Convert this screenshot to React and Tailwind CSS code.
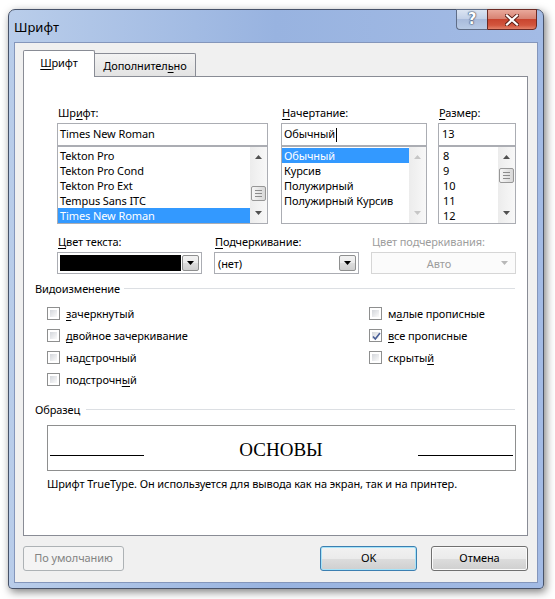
import React from "react";

const U = ({ children }) => (
  <span className="underline underline-offset-[2px] decoration-1">{children}</span>
);

function Arrow({ dir = "down", color = "#505050" }) {
  return (
    <svg width="7" height="4" viewBox="0 0 7 4" className="block">
      {dir === "down" ? (
        <path d="M0 0H7L3.5 4Z" fill={color} />
      ) : (
        <path d="M0 4H7L3.5 0Z" fill={color} />
      )}
    </svg>
  );
}

function Thumb({ className }) {
  return (
    <div
      className={`mx-[1px] h-[15px] rounded-[2px] border border-[#979797] bg-linear-to-r from-[#f6f6f6] to-[#d8d8d8] flex flex-col items-center justify-center gap-[2px] ${className}`}
    >
      <div className="w-[7px] h-px bg-[#8c8c8c]" />
      <div className="w-[7px] h-px bg-[#8c8c8c]" />
      <div className="w-[7px] h-px bg-[#8c8c8c]" />
    </div>
  );
}

function VScroll({ thumbClass, disabled }) {
  const c = disabled ? "#c6c6c6" : "#505050";
  return (
    <div className="w-[17px] h-full flex flex-col bg-linear-to-r from-[#ececec] to-[#f8f8f8]">
      <div className="h-[17px] flex items-center justify-center pt-[2px]">
        <Arrow dir="up" color={c} />
      </div>
      <div className="flex-1 flex flex-col">
        {thumbClass && <Thumb className={thumbClass} />}
      </div>
      <div className="h-[17px] flex items-center justify-center pb-[3px]">
        <Arrow dir="down" color={c} />
      </div>
    </div>
  );
}

function ListBox({ items, selected, thumbClass, disabled, textPad = "pl-[2px]" }) {
  return (
    <div className="h-[78px] border border-[#abadb3] bg-white flex">
      <div className="flex-1 pt-[1px] overflow-hidden">
        {items.map((it, i) => (
          <div
            key={it}
            className={`h-[15px] leading-[15px] whitespace-nowrap ${textPad} ${
              i === selected ? "bg-[#3399ff] text-white" : ""
            }`}
          >
            {it}
          </div>
        ))}
      </div>
      <VScroll thumbClass={thumbClass} disabled={disabled} />
    </div>
  );
}

function DropBtn({ disabled }) {
  return disabled ? (
    <div className="w-[17px] h-full flex items-center justify-center">
      <Arrow color="#b8b8b8" />
    </div>
  ) : (
    <div className="w-[17px] h-full rounded-[2px] border border-[#8e8f8f] bg-[linear-gradient(to_bottom,#f2f2f2_0%,#ebebeb_50%,#dddddd_50%,#cfcfcf_100%)] flex items-center justify-center">
      <Arrow color="#000000" />
    </div>
  );
}

function Check({ checked }) {
  return (
    <div className="w-[13px] h-[13px] border border-[#8e8f8f] bg-white p-[2px] shrink-0">
      <div className="w-full h-full bg-linear-to-br from-[#d3d6db] to-[#fbfbfb] relative">
        {checked && (
          <svg width="11" height="11" viewBox="0 0 11 11" className="absolute -left-[1px] -top-[1px]">
            <path d="M2 5.5L4.3 8L9 2" fill="none" stroke="#4a5f97" strokeWidth="1.6" />
          </svg>
        )}
      </div>
    </div>
  );
}

function CheckRow({ checked, children }) {
  return (
    <div className="h-[22px] flex items-center gap-[6px]">
      <Check checked={checked} />
      <span className="leading-[15px]">{children}</span>
    </div>
  );
}

export default function App() {
  return (
    <div className="w-[555px] h-[599px] bg-white overflow-hidden font-['Noto_Sans','Open_Sans',sans-serif] text-[11px] tracking-[-0.1px] text-black">
      <div className="ml-[8px] mt-[9px] w-[536px] h-[580px] rounded-t-[7px] rounded-b-[4px] border border-[#48536a] bg-[linear-gradient(to_right,#b9cdea,#98b3e0_50%,#a3bbe5)] shadow-[2px_3px_9px_rgba(0,0,0,0.5)] flex flex-col px-[5px] pb-[5px]">
        {/* title bar */}
        <div className="h-[32px] flex items-start">
          <span className="mt-[9px] text-[13px] leading-[17px] tracking-normal text-black">Шрифт</span>
          <div className="ml-auto mr-[1px] -mt-px flex h-[21px]">
            <div className="w-[31px] h-full rounded-bl-[4px] border border-[#5f6d87] border-r-0 bg-[linear-gradient(to_bottom,#dbe4f2_0%,#c3d1e8_45%,#a9bbdb_50%,#b9cbe6_100%)] flex items-center justify-center">
              <span className="font-['DejaVu_Sans',sans-serif] text-[15px] leading-none font-bold text-white [text-shadow:0_0_1px_#3b4a66,0_0_1px_#3b4a66,0_0_2px_#3b4a66]">
                ?
              </span>
            </div>
            <div className="w-[50px] h-full rounded-br-[4px] border border-[#6b2a24] bg-[linear-gradient(to_bottom,#e9a99b_0%,#d88373_45%,#c9452f_50%,#d2553d_80%,#e3826a_100%)] flex items-center justify-center">
              <svg width="14" height="12" viewBox="0 0 14 12">
                <path d="M2 1.5L12 10.5M12 1.5L2 10.5" stroke="#5a1d14" strokeWidth="4" strokeLinecap="square" />
                <path d="M2 1.5L12 10.5M12 1.5L2 10.5" stroke="#ffffff" strokeWidth="2.2" strokeLinecap="square" />
              </svg>
            </div>
          </div>
        </div>

        {/* client */}
        <div className="flex-1 bg-[#f0f0f0] border border-[#8496bb] flex flex-col">
          {/* tabs */}
          <div className="mt-[7px] ml-[8px] flex items-end h-[26px]">
            <div className="relative z-10 w-[72px] h-[27px] -mb-px bg-white border border-b-0 border-[#898c95] rounded-t-[2px] flex items-center justify-center pb-[4px]">
              <span className="leading-[15px]">
                <U>Ш</U>рифт
              </span>
            </div>
            <div className="w-[101px] h-[23px] border border-l-0 border-b-0 border-[#898c95] rounded-tr-[2px] bg-linear-to-b from-[#f3f3f3] to-[#e3e3e3] flex items-center justify-center">
              <span className="leading-[15px]">
                Дополнител<U>ь</U>но
              </span>
            </div>
          </div>

          {/* panel */}
          <div className="ml-[8px] mr-[9px] h-[460px] bg-white border border-[#898c95] flex flex-col">
            {/* section 1 */}
            <div className="pt-[28px] pl-[33px] flex">
              <div className="w-[211px] flex flex-col">
                <div className="h-[15px] leading-[15px] pl-[1px]">
                  Шр<U>и</U>фт:
                </div>
                <div className="mt-[3px] h-[23px] border border-[#abadb3] bg-white pl-[2px] flex items-center">
                  Times New Roman
                </div>
                <ListBox
                  items={["Tekton Pro", "Tekton Pro Cond", "Tekton Pro Ext", "Tempus Sans ITC", "Times New Roman"]}
                  selected={4}
                  thumbClass="mt-[22px]"
                />
              </div>
              <div className="ml-[13px] w-[146px] flex flex-col">
                <div className="h-[15px] leading-[15px] pl-[1px]">
                  <U>Н</U>ачертание:
                </div>
                <div className="mt-[3px] h-[23px] border border-[#abadb3] bg-white pl-[2px] flex items-center">
                  Обычный
                  <span className="ml-px w-px h-[14px] bg-black" />
                </div>
                <ListBox
                  items={["Обычный", "Курсив", "Полужирный", "Полужирный Курсив"]}
                  selected={0}
                  disabled
                />
              </div>
              <div className="ml-[11px] w-[78px] flex flex-col">
                <div className="h-[15px] leading-[15px] pl-[1px]">
                  <U>Р</U>азмер:
                </div>
                <div className="mt-[3px] h-[23px] border border-[#abadb3] bg-white pl-[3px] flex items-center">
                  13
                </div>
                <ListBox
                  items={["8", "9", "10", "11", "12"]}
                  selected={-1}
                  thumbClass="mt-[4px]"
                  textPad="pl-[4px]"
                />
              </div>
            </div>

            {/* section 2 */}
            <div className="mt-[10px] pl-[33px] flex gap-[12px]">
              <div className="w-[145px] flex flex-col">
                <div className="h-[15px] leading-[15px] pl-[1px]">
                  <U>Ц</U>вет текста:
                </div>
                <div className="mt-[3px] h-[22px] border border-[#abadb3] bg-white flex items-center p-[2px] gap-[1px]">
                  <div className="flex-1 h-[16px] bg-black" />
                  <DropBtn />
                </div>
              </div>
              <div className="w-[145px] flex flex-col">
                <div className="h-[15px] leading-[15px] pl-[1px]">
                  <U>П</U>одчеркивание:
                </div>
                <div className="mt-[3px] h-[22px] border border-[#abadb3] bg-white flex items-center p-[2px]">
                  <div className="flex-1 pl-px leading-[15px]">(нет)</div>
                  <DropBtn />
                </div>
              </div>
              <div className="w-[145px] flex flex-col">
                <div className="h-[15px] leading-[15px] pl-[1px] text-[#9d9d9d]">
                  Цвет подчеркивания:
                </div>
                <div className="mt-[3px] h-[22px] border border-[#d6d6d6] bg-[#fbfbfb] flex items-center p-[2px]">
                  <div className="flex-1 text-center leading-[15px] text-[#9d9d9d] pl-[8px]">Авто</div>
                  <DropBtn disabled />
                </div>
              </div>
            </div>

            {/* Видоизменение */}
            <div className="mt-[7px] pl-[11px] pr-[12px] h-[15px] flex items-center">
              <span className="leading-[15px]">Видоизменение</span>
              <div className="flex-1 ml-[4px] h-px bg-[#dcdfe3]" />
            </div>
            <div className="mt-[6px] pl-[23px] flex">
              <div className="w-[322px] flex flex-col">
                <CheckRow>
                  <U>з</U>ачеркнутый
                </CheckRow>
                <CheckRow>
                  <U>д</U>войное зачеркивание
                </CheckRow>
                <CheckRow>
                  над<U>с</U>трочный
                </CheckRow>
                <CheckRow>
                  подстрочн<U>ы</U>й
                </CheckRow>
              </div>
              <div className="flex flex-col">
                <CheckRow>
                  м<U>а</U>лые прописные
                </CheckRow>
                <CheckRow checked>
                  <U>в</U>се прописные
                </CheckRow>
                <CheckRow>
                  скрыты<U>й</U>
                </CheckRow>
              </div>
            </div>

            {/* Образец */}
            <div className="mt-[12px] pl-[11px] pr-[12px] h-[15px] flex items-center">
              <span className="leading-[15px]">Образец</span>
              <div className="flex-1 ml-[6px] h-px bg-[#dcdfe3]" />
            </div>
            <div className="mt-[8px] ml-[23px] w-[469px] h-[46px] border border-[#8e8f8f] bg-white flex items-baseline pt-[14px] px-[2px]">
              <div className="w-[94px] h-px bg-black" />
              <div className="flex-1 text-center font-['Times_New_Roman','Liberation_Serif',serif] text-[19px] leading-[19px] tracking-normal">
                ОСНОВЫ
              </div>
              <div className="w-[95px] h-px bg-black" />
            </div>
            <div className="mt-[5px] pl-[23px] leading-[15px]">
              Шрифт TrueType. Он используется для вывода как на экран, так и на принтер.
            </div>
          </div>

          {/* buttons */}
          <div className="mt-[10px] ml-[8px] mr-[9px] flex">
            <div className="w-[101px] h-[25px] rounded-[3px] border border-[#adb2b5] bg-[#f4f4f4] text-[#838383] flex items-center justify-center">
              По умолчанию
            </div>
            <div className="ml-auto w-[97px] h-[25px] rounded-[3px] border border-[#3c7fb1] shadow-[inset_0_0_0_1px_#a6e3f8] bg-[linear-gradient(to_bottom,#f2f2f2_0%,#ebebeb_50%,#dddddd_50%,#cfcfcf_100%)] flex items-center justify-center">
              OK
            </div>
            <div className="ml-[14px] w-[97px] h-[25px] rounded-[3px] border border-[#707070] shadow-[inset_0_0_0_1px_#fbfbfb] bg-[linear-gradient(to_bottom,#f2f2f2_0%,#ebebeb_50%,#dddddd_50%,#cfcfcf_100%)] flex items-center justify-center">
              Отмена
            </div>
          </div>
        </div>
      </div>
    </div>
  );
}
